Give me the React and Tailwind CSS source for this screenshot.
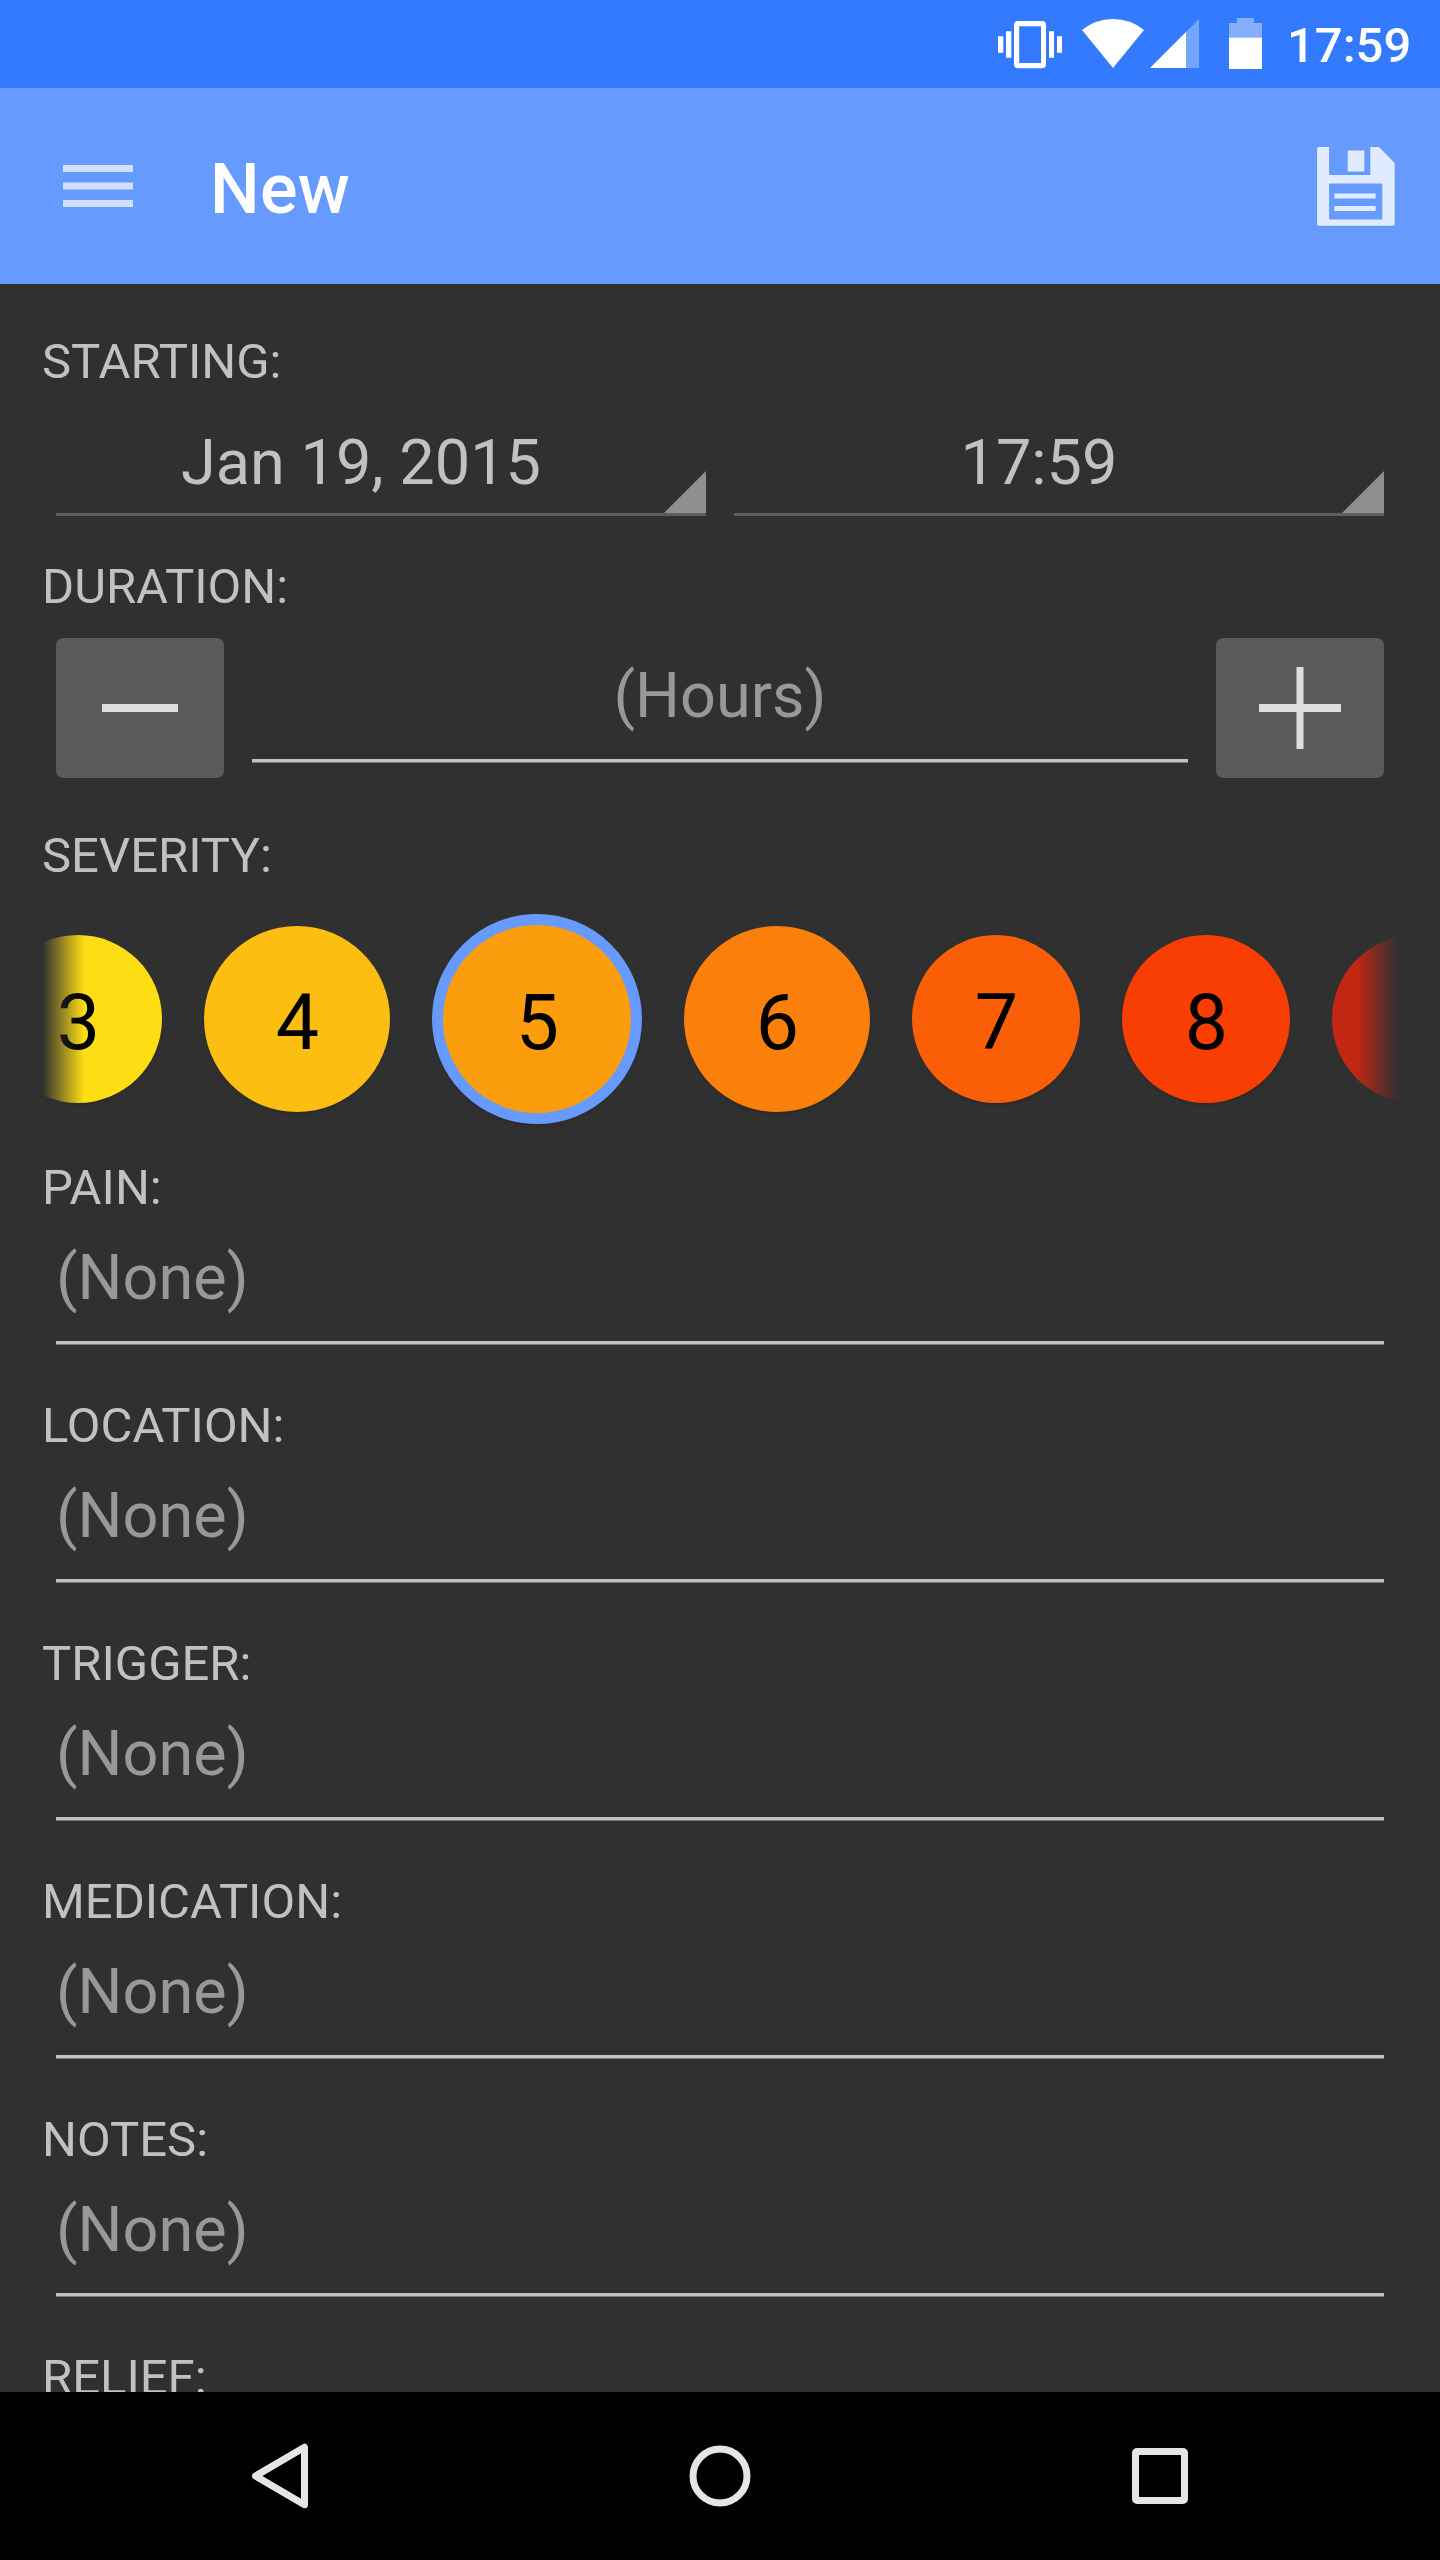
import { useState } from "react";

const severities = [
  { value: 3, className: "size-[168px] bg-[#fddd14]" },
  { value: 4, className: "size-[186px] bg-[#fdbe12]" },
  { value: 5, className: "size-[210px] border-[11px] border-[#669aff] bg-[#fc9d0e]" },
  { value: 6, className: "size-[186px] bg-[#fb7f0b]" },
  { value: 7, className: "size-[168px] bg-[#fa5f07]" },
  { value: 8, className: "size-[168px] bg-[#f93e04]" },
];

const fields = ["Pain", "Location", "Trigger", "Medication", "Notes"];

function StatusBar() {
  return (
    <div className="flex h-[88px] items-center bg-[#337aff] pl-[998px] text-white">
      <svg width="270" height="88" viewBox="18 0 270 88" fill="currentColor">
        <path d="M18 36.3h5.3v16.4H18zM26 31.2h5.3v26.5H26zM69 31.2h5v26.5h-5zM77 36.3h5v16.4h-5z" />
        <path
          fillRule="evenodd"
          d="M38 21h24a4 4 0 0 1 4 4v39.3a4 4 0 0 1-4 4H38a4 4 0 0 1-4-4V25a4 4 0 0 1 4-4zm1.2 5.2V63H61V26.2z"
        />
        <path d="M102 30Q115.5 19 133 19T164 30L133 68z" />
        <path d="M219 19v49h-49z" opacity="0.33" />
        <path d="M206 32v36h-36z" />
        <path d="M257 18h17v5h8v14.5h-33V23h8z" opacity="0.4" />
        <path d="M249 37.5h33V69h-33z" />
      </svg>
      <span className="mt-[2px] ml-[19px] text-[49px] leading-[57px] font-medium">
        17:59
      </span>
    </div>
  );
}

function AppBar() {
  return (
    <header className="flex h-[196px] items-center justify-between bg-[#669aff] pr-[45px] pl-[63px]">
      <div className="flex items-center">
        <button type="button" aria-label="Menu" className="text-[#d1e0ff]">
          <svg width="70" height="42" viewBox="0 0 70 42" fill="currentColor">
            <path d="M0 0h70v7H0zM0 17.5h70v7H0zM0 35h70v7H0z" />
          </svg>
        </button>
        <h1 className="mt-[6px] ml-[77px] text-[70px] leading-[82px] font-medium tracking-[0.3px] text-white">
          New
        </h1>
      </div>
      <button type="button" aria-label="Save" className="text-[#e0ebff]">
        <svg width="78" height="79" viewBox="337.3 146.6 78 79" fill="currentColor">
          <path
            fillRule="evenodd"
            d="M339 146.7H349.4V174.7H390.6V146.7H399.3L415 162.5V223.7Q415 225.3 413.4 225.3H339Q337.4 225.3 337.4 223.7V148.3Q337.4 146.7 339 146.7zM349.4 183V219H402.6V183z"
          />
          <path d="M368 150h16.7v21H368zM354.7 193H396v5h-41.3zM354.7 205.7H396v5h-41.3z" />
        </svg>
      </button>
    </header>
  );
}

function Label({ children }) {
  return (
    <div className="h-[57px] text-[49px] leading-[57px] whitespace-nowrap text-[#c1c1c1] uppercase">
      {children}:
    </div>
  );
}

function Spinner({ value }) {
  return (
    <button
      type="button"
      className="relative flex h-[90px] flex-1 justify-center border-b-[3px] border-[#5e5e5e] pr-[40px] text-[63px] leading-[74px] text-[#c1c1c1]"
    >
      {value}
      <svg
        className="absolute right-0 bottom-0"
        width="42"
        height="42"
        viewBox="0 0 42 42"
        fill="#8f8f8f"
      >
        <path d="M42 0v42H0z" />
      </svg>
    </button>
  );
}

function StepButton({ label, path, onClick }) {
  return (
    <button
      type="button"
      aria-label={label}
      onClick={onClick}
      className="flex h-[140px] w-[168px] items-center justify-center rounded-[7px] bg-[#5a5a5c]"
    >
      <svg width="84" height="84" viewBox="0 0 84 84" fill="#dedede">
        <path d={path} />
      </svg>
    </button>
  );
}

function Underline() {
  return (
    <div className="flex h-[4px] flex-col">
      <div className="h-[3px] bg-[#c1c1c1]" />
      <div className="h-px bg-[#797979]" />
    </div>
  );
}

function TextField({ label }) {
  const [value, setValue] = useState("");

  return (
    <div className="pb-[52px]">
      <Label>{label}</Label>
      <div className="px-[14px] pt-[24px]">
        <input
          className="block h-[101px] w-full pb-[27px] text-[63px] leading-[74px] text-[#c1c1c1] outline-none placeholder:text-[#989898]"
          placeholder="(None)"
          value={value}
          onChange={(event) => setValue(event.target.value)}
        />
        <Underline />
      </div>
    </div>
  );
}

function SeverityPicker() {
  return (
    <div className="relative mb-[5px] flex h-[270px] items-center overflow-hidden">
      <div className="-ml-[48px] flex shrink-0 items-center gap-[42px]">
        {severities.map(({ value, className }) => (
          <button
            key={value}
            type="button"
            className={`flex shrink-0 items-center justify-center rounded-full pt-[7px] pl-px text-[77px] leading-[90px] text-black shadow-[0_2px_3px_rgba(0,0,0,0.12)] ${className}`}
          >
            {value}
          </button>
        ))}
        <button
          type="button"
          aria-label="Next"
          className="size-[168px] shrink-0 rounded-full bg-[#c42614]"
        />
      </div>
      {/* edge fades over the scrolling row */}
      <div className="absolute inset-y-0 left-0 w-[42px] bg-linear-to-r from-[#303030] to-[#303030]/0" />
      <div className="absolute inset-y-0 right-0 w-[42px] bg-linear-to-l from-[#303030] to-[#303030]/0" />
    </div>
  );
}

function NavButton({ label, children }) {
  return (
    <button type="button" aria-label={label} className="flex flex-1 justify-center">
      <svg
        width="70"
        height="70"
        viewBox="0 0 70 70"
        fill="none"
        stroke="currentColor"
        strokeWidth="7"
        strokeLinejoin="round"
      >
        {children}
      </svg>
    </button>
  );
}

function NavBar() {
  return (
    <nav className="flex h-[168px] items-center bg-black px-[60px] text-[#e5e5e5]">
      <NavButton label="Back">
        <path d="M59.5 6.2V63.8L10.5 35z" />
      </NavButton>
      <NavButton label="Home">
        <circle cx="35" cy="35" r="27" />
      </NavButton>
      <NavButton label="Recent apps">
        <rect x="10.5" y="10.5" width="49" height="49" rx="1.5" />
      </NavButton>
    </nav>
  );
}

export default function App() {
  const [hours, setHours] = useState("");

  function changeHours(amount) {
    setHours((current) => String(Math.max(0, Number(current) + amount)));
  }

  return (
    <div className="flex h-[2560px] w-[1440px] flex-col overflow-hidden bg-[#303030] font-['Roboto',sans-serif]">
      <StatusBar />
      <AppBar />

      <main className="h-[2108px] overflow-hidden px-[42px] pt-[49px]">
        <Label>Starting</Label>
        <div className="mt-[36px] mb-[42px] flex gap-[28px] px-[14px]">
          <Spinner value="Jan 19, 2015" />
          <Spinner value="17:59" />
        </div>

        <Label>Duration</Label>
        <div className="mt-[23px] mb-[49px] flex gap-[28px] px-[14px]">
          <StepButton label="Less" path="M4 38h76v8H4z" onClick={() => changeHours(-1)} />
          <div className="min-w-0 flex-1 pt-[20px]">
            <input
              className="block h-[101px] w-full pb-[27px] text-center text-[63px] leading-[74px] text-[#c1c1c1] outline-none placeholder:text-[#989898]"
              placeholder="(Hours)"
              value={hours}
              onChange={(event) => setHours(event.target.value)}
            />
            <Underline />
          </div>
          <StepButton
            label="More"
            path="M1 38h37.5V1h7v37H83v8H45.5v37h-7V46H1z"
            onClick={() => changeHours(1)}
          />
        </div>

        <Label>Severity</Label>
        <SeverityPicker />

        {fields.map((label) => (
          <TextField key={label} label={label} />
        ))}
        <Label>Relief</Label>
      </main>

      <NavBar />
    </div>
  );
}
